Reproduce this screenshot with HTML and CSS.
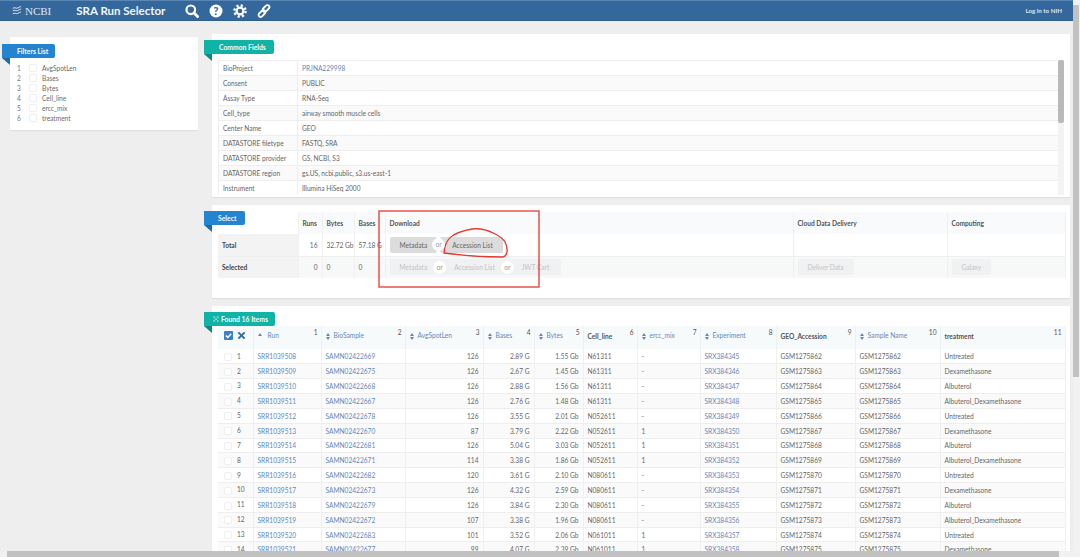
FILE: index.html
```html
<!DOCTYPE html>
<html lang="en">
<head>
<meta charset="utf-8">
<title>SRA Run Selector</title>
<link rel="stylesheet" href="styles.css">
</head>
<body>
<header class="topbar">
  <a class="logo">
    <svg class="logo-mark" viewBox="0 0 12 12"><path d="M1 3.500C3 1.500 5 4 7 3s3-2 4-1.500M1 6.500C3 4.500 5 7 7 6s3-2 4-1.500M1 10C3 8 5 10.500 7 9.500s3-2 4-1.500"/></svg>
    <span class="logo-text">NCBI</span>
  </a>
  <h1 class="title">SRA Run Selector</h1>
  <nav class="tools">
    <svg class="tool" viewBox="0 0 14 14"><circle cx="5.800" cy="5.800" r="4.300" class="ln"/><path d="M9 9l3.600 3.600" class="ln thick"/></svg>
    <svg class="tool" viewBox="0 0 14 14"><circle cx="7" cy="7" r="6.500" class="fill"/><text x="7" y="10.700" class="q">?</text></svg>
    <svg class="tool" viewBox="0 0 14 14"><circle cx="7" cy="7" r="3.400" class="ln"/><circle cx="7" cy="7" r="5.600" class="teeth"/></svg>
    <svg class="tool" viewBox="0 0 14 14"><rect x="7" y="0.500" width="4" height="8" rx="2" transform="rotate(45 9 4.500)" class="ln thin"/><rect x="3" y="5.500" width="4" height="8" rx="2" transform="rotate(45 5 9.500)" class="ln thin"/></svg>
  </nav>
  <a class="login">Log in to NIH</a>
</header>

<div class="layout">
  <aside class="card filters">
    <div class="badge badge-blue">Filters List</div>
    <ul class="filter-list">
      <li><span class="num">1</span><span class="check"></span>AvgSpotLen</li>
      <li><span class="num">2</span><span class="check"></span>Bases</li>
      <li><span class="num">3</span><span class="check"></span>Bytes</li>
      <li><span class="num">4</span><span class="check"></span>Cell_line</li>
      <li><span class="num">5</span><span class="check"></span>ercc_mix</li>
      <li><span class="num">6</span><span class="check"></span>treatment</li>
    </ul>
  </aside>

  <main class="main">
    <section class="card common">
      <div class="badge badge-teal">Common Fields</div>
      <div class="common-wrap">
        <table class="grid common-table">
          <tr><th>BioProject</th><td><a>PRJNA229998</a></td></tr>
          <tr><th>Consent</th><td>PUBLIC</td></tr>
          <tr><th>Assay Type</th><td>RNA-Seq</td></tr>
          <tr><th>Cell_type</th><td>airway smooth muscle cells</td></tr>
          <tr><th>Center Name</th><td>GEO</td></tr>
          <tr><th>DATASTORE filetype</th><td>FASTQ, SRA</td></tr>
          <tr><th>DATASTORE provider</th><td>GS, NCBI, S3</td></tr>
          <tr><th>DATASTORE region</th><td>gs.US, ncbi.public, s3.us-east-1</td></tr>
          <tr><th>Instrument</th><td>Illumina HiSeq 2000</td></tr>
        </table>
        <div class="inner-scroll"><div class="inner-thumb"></div></div>
      </div>
    </section>

    <section class="card select">
      <div class="badge badge-blue">Select</div>
      <table class="grid select-table">
        <colgroup><col class="s-label"><col class="s-runs"><col class="s-bytes"><col class="s-bases"><col class="s-dl"><col class="s-cloud"><col class="s-comp"></colgroup>
        <tr class="s-head"><th class="blank"></th><th>Runs</th><th>Bytes</th><th>Bases</th><th class="pad">Download</th><th class="pad">Cloud Data Delivery</th><th class="pad">Computing</th></tr>
        <tr class="s-total">
          <th class="rowlabel">Total</th><td class="r">16</td><td>32.72 Gb</td><td>57.18 G</td>
          <td class="pad">
            <div class="btns"><span class="btn">Metadata</span><span class="or">or</span><span class="btn">Accession List</span></div>
          </td><td></td><td></td>
        </tr>
        <tr class="s-sel">
          <th class="rowlabel">Selected</th><td class="r">0</td><td>0</td><td>0</td>
          <td class="pad">
            <div class="btns off"><span class="btn">Metadata</span><span class="or">or</span><span class="btn">Accession List</span><span class="or">or</span><span class="btn">JWT Cart</span></div>
          </td>
          <td class="pad"><span class="btn solo">Deliver Data</span></td>
          <td class="pad"><span class="btn solo">Galaxy</span></td>
        </tr>
      </table>
      <svg class="annotation" viewBox="0 0 162 78">
        <rect x="1" y="1" width="160" height="76"/>
        <path d="M66 43C67 30 72 23 94 19C110 17 125 28 127 32C131 40 129 47 124 47C100 47 80 45 66 43Z"/>
      </svg>
    </section>

    <section class="card found">
      <div class="badge badge-teal badge-icon">
        <svg class="mini" viewBox="0 0 8 8"><path d="M1 1l6 6M7 1L1 7M1 1h2M1 1v2M7 1H5M7 1v2M1 7h2M1 7V5M7 7H5M7 7V5"/></svg>Found 16 Items
      </div>
      <table class="grid runs">
        <colgroup><col class="c0"><col class="c1"><col class="c2"><col class="c3"><col class="c4"><col class="c5"><col class="c6"><col class="c7"><col class="c8"><col class="c9"><col class="c10"><col class="c11"></colgroup>
        <thead>
          <tr>
            <th class="ctl"><span class="check-on"><svg viewBox="0 0 10 10"><path d="M2 5l2.200 2.200L8 3"/></svg></span><svg class="cross" viewBox="0 0 10 10"><path d="M1.500 1.500l7 7M8.500 1.500l-7 7"/></svg></th>
            <th class="link-h"><span class="sort up"></span>Run<i>1</i></th>
            <th class="link-h"><span class="sort"></span>BioSample<i>2</i></th>
            <th class="link-h"><span class="sort"></span>AvgSpotLen<i>3</i></th>
            <th class="link-h"><span class="sort"></span>Bases<i>4</i></th>
            <th class="link-h"><span class="sort"></span>Bytes<i>5</i></th>
            <th>Cell_line<i>6</i></th>
            <th class="link-h"><span class="sort"></span>ercc_mix<i>7</i></th>
            <th class="link-h"><span class="sort"></span>Experiment<i>8</i></th>
            <th>GEO_Accession<i>9</i></th>
            <th class="link-h"><span class="sort"></span>Sample Name<i>10</i></th>
            <th>treatment<i>11</i></th>
          </tr>
        </thead>
        <tbody>
          <tr><td><span class="check"></span>1</td><td><a>SRR1039508</a></td><td><a>SAMN02422669</a></td><td class="r">126</td><td class="r">2.89 G</td><td class="r">1.55 Gb</td><td>N61311</td><td>-</td><td><a>SRX384345</a></td><td>GSM1275862</td><td>GSM1275862</td><td>Untreated</td></tr>
          <tr><td><span class="check"></span>2</td><td><a>SRR1039509</a></td><td><a>SAMN02422675</a></td><td class="r">126</td><td class="r">2.67 G</td><td class="r">1.45 Gb</td><td>N61311</td><td>-</td><td><a>SRX384346</a></td><td>GSM1275863</td><td>GSM1275863</td><td>Dexamethasone</td></tr>
          <tr><td><span class="check"></span>3</td><td><a>SRR1039510</a></td><td><a>SAMN02422668</a></td><td class="r">126</td><td class="r">2.88 G</td><td class="r">1.56 Gb</td><td>N61311</td><td>-</td><td><a>SRX384347</a></td><td>GSM1275864</td><td>GSM1275864</td><td>Albuterol</td></tr>
          <tr><td><span class="check"></span>4</td><td><a>SRR1039511</a></td><td><a>SAMN02422667</a></td><td class="r">126</td><td class="r">2.76 G</td><td class="r">1.48 Gb</td><td>N61311</td><td>-</td><td><a>SRX384348</a></td><td>GSM1275865</td><td>GSM1275865</td><td>Albuterol_Dexamethasone</td></tr>
          <tr><td><span class="check"></span>5</td><td><a>SRR1039512</a></td><td><a>SAMN02422678</a></td><td class="r">126</td><td class="r">3.55 G</td><td class="r">2.01 Gb</td><td>N052611</td><td>-</td><td><a>SRX384349</a></td><td>GSM1275866</td><td>GSM1275866</td><td>Untreated</td></tr>
          <tr><td><span class="check"></span>6</td><td><a>SRR1039513</a></td><td><a>SAMN02422670</a></td><td class="r">87</td><td class="r">3.79 G</td><td class="r">2.22 Gb</td><td>N052611</td><td>1</td><td><a>SRX384350</a></td><td>GSM1275867</td><td>GSM1275867</td><td>Dexamethasone</td></tr>
          <tr><td><span class="check"></span>7</td><td><a>SRR1039514</a></td><td><a>SAMN02422681</a></td><td class="r">126</td><td class="r">5.04 G</td><td class="r">3.03 Gb</td><td>N052611</td><td>1</td><td><a>SRX384351</a></td><td>GSM1275868</td><td>GSM1275868</td><td>Albuterol</td></tr>
          <tr><td><span class="check"></span>8</td><td><a>SRR1039515</a></td><td><a>SAMN02422671</a></td><td class="r">114</td><td class="r">3.38 G</td><td class="r">1.86 Gb</td><td>N052611</td><td>1</td><td><a>SRX384352</a></td><td>GSM1275869</td><td>GSM1275869</td><td>Albuterol_Dexamethasone</td></tr>
          <tr><td><span class="check"></span>9</td><td><a>SRR1039516</a></td><td><a>SAMN02422682</a></td><td class="r">120</td><td class="r">3.61 G</td><td class="r">2.10 Gb</td><td>N080611</td><td>-</td><td><a>SRX384353</a></td><td>GSM1275870</td><td>GSM1275870</td><td>Untreated</td></tr>
          <tr><td><span class="check"></span>10</td><td><a>SRR1039517</a></td><td><a>SAMN02422673</a></td><td class="r">126</td><td class="r">4.32 G</td><td class="r">2.59 Gb</td><td>N080611</td><td>-</td><td><a>SRX384354</a></td><td>GSM1275871</td><td>GSM1275871</td><td>Dexamethasone</td></tr>
          <tr><td><span class="check"></span>11</td><td><a>SRR1039518</a></td><td><a>SAMN02422679</a></td><td class="r">126</td><td class="r">3.84 G</td><td class="r">2.30 Gb</td><td>N080611</td><td>-</td><td><a>SRX384355</a></td><td>GSM1275872</td><td>GSM1275872</td><td>Albuterol</td></tr>
          <tr><td><span class="check"></span>12</td><td><a>SRR1039519</a></td><td><a>SAMN02422672</a></td><td class="r">107</td><td class="r">3.38 G</td><td class="r">1.96 Gb</td><td>N080611</td><td>-</td><td><a>SRX384356</a></td><td>GSM1275873</td><td>GSM1275873</td><td>Albuterol_Dexamethasone</td></tr>
          <tr><td><span class="check"></span>13</td><td><a>SRR1039520</a></td><td><a>SAMN02422683</a></td><td class="r">101</td><td class="r">3.52 G</td><td class="r">2.06 Gb</td><td>N061011</td><td>1</td><td><a>SRX384357</a></td><td>GSM1275874</td><td>GSM1275874</td><td>Untreated</td></tr>
          <tr><td><span class="check"></span>14</td><td><a>SRR1039521</a></td><td><a>SAMN02422677</a></td><td class="r">99</td><td class="r">4.07 G</td><td class="r">2.39 Gb</td><td>N061011</td><td>1</td><td><a>SRX384358</a></td><td>GSM1275875</td><td>GSM1275875</td><td>Dexamethasone</td></tr>
        </tbody>
      </table>
    </section>
  </main>
</div>

<div class="vbar"><div class="vthumb"></div></div>
<div class="hbar"><div class="hthumb"></div></div>
</body>
</html>
```

FILE: styles.css
```css
* { box-sizing: border-box; }
html, body { margin: 0; height: 557px; overflow: hidden; }
body {
  background: #eeeeee;
  font-family: Lato, "Liberation Sans", sans-serif;
  font-size: 6.6px;
  color: #666;
}
a { color: #5f88bb; }

.topbar {
  height: 21px;
  background: #34679b;
  border-top: 1px solid #5a88b5;
  border-bottom: 1px solid #2f5d8c;
  display: flex;
  align-items: center;
  color: #fff;
  padding: 0 18px 0 12px;
}
.logo { display: flex; align-items: center; gap: 3px; color: #dfe8f1; }
.logo-mark { width: 10px; height: 11px; }
.logo-mark path { fill: none; stroke: #dfe8f1; stroke-width: 1.2; }
.logo-text { font-family: "Liberation Serif", serif; font-size: 11px; }
.title { margin: 0 0 0 25px; font-size: 11.5px; font-weight: 700; color: #f2f6fa; }
.tools { display: flex; gap: 10px; margin-left: 20px; }
.tool { width: 14px; height: 14px; display: block; }
.ln { fill: none; stroke: #fff; stroke-width: 2.2; }
.ln.thick { stroke-width: 2.8; stroke-linecap: round; }
.ln.thin { stroke-width: 1.8; }
.fill { fill: #fff; }
.q { fill: #34679b; font-size: 10.5px; font-weight: 900; text-anchor: middle; font-family: Lato, sans-serif; }
.teeth { fill: none; stroke: #fff; stroke-width: 2.4; stroke-dasharray: 2.2 2.2; }
.login { margin-left: auto; font-size: 6.2px; font-weight: 700; color: #dfe8f1; }

.layout {
  display: grid;
  grid-template-columns: 188px 858px;
  column-gap: 14px;
  padding-left: 10px;
  align-items: start;
}
.card {
  position: relative;
  background: #fff;
  box-shadow: 0 1px 1px #dfdfdf;
}
.filters { margin-top: 16px; height: 93px; padding: 26px 0 0 7px; }
.main { display: flex; flex-direction: column; gap: 8px; padding-top: 13px; }

.badge {
  position: absolute;
  left: -8px;
  height: 14px;
  line-height: 14px;
  padding: 0 7px 0 14px;
  font-size: 6.8px;
  font-weight: 700;
  color: #f2fbfa;
  border-radius: 0 2px 2px 0;
  white-space: nowrap;
}
.badge::after {
  content: "";
  position: absolute;
  left: 0;
  top: 14px;
  border-top: 7px solid;
  border-left: 8px solid transparent;
}
.badge-blue { background: #2584cf; }
.badge-blue::after { border-top-color: #1d6aa8; }
.badge-teal { background: #11b3a7; }
.badge-teal::after { border-top-color: #0b8a80; }
.filters .badge { top: 7px; padding-left: 15px; padding-right: 7px; }
.common .badge { top: 6px; padding-left: 15px; padding-right: 8px; }
.select .badge { top: 6px; padding-left: 14px; padding-right: 9px; }
.found .badge { top: 6px; padding-left: 9px; padding-right: 7px; display: flex; align-items: center; gap: 2px; }
.mini { width: 6px; height: 6px; }
.mini path { fill: none; stroke: #a9e6e0; stroke-width: .9; }

.filter-list { list-style: none; margin: 0; padding: 0; }
.filter-list li { height: 10px; display: flex; align-items: center; color: #6a6a6a; }
.num { width: 12px; color: #777; }
.check {
  display: inline-block;
  width: 8px;
  height: 8px;
  border: 1px solid #efefef;
  border-radius: 2px;
  background: #fff;
  margin-right: 5px;
  vertical-align: middle;
}

.grid { border-collapse: collapse; table-layout: fixed; }
.grid td, .grid th {
  padding: 0 4px;
  height: 15px;
  text-align: left;
  white-space: nowrap;
  overflow: visible;
}
.r { text-align: right !important; }

.common { height: 163px; padding: 26px 0 0 6px; }
.common-wrap { display: flex; height: 135px; overflow: hidden; }
.common-table { width: 840px; height: 135px; }
.common-table tr { border-bottom: 1px solid #eee; border-top: 1px solid #eee; }
.common-table th { width: 79px; font-weight: 400; border-right: 1px solid #eee; border-left: 1px solid #eee; padding-left: 4px; }
.common-table tr:nth-child(even) { background: #fafafa; }
.inner-scroll { width: 6px; height: 135px; background: #f3f3f3; flex: none; }
.inner-thumb { height: 63px; background: #b9b9b9; border-radius: 2px; }

.select { height: 93px; padding: 7px 0 0 6px; }
.select-table { width: 847px; }
.s-label { width: 80px; } .s-runs { width: 24px; } .s-bytes { width: 32px; }
.s-bases { width: 31px; } .s-dl { width: 408px; } .s-cloud { width: 154px; } .s-comp { width: 118px; }
.select-table td, .select-table th { border-right: 1px solid #f0f0f0; }
.select-table .pad { padding-left: 4px; }
.s-head { background: #f8fafb; }
.s-head th { height: 22px; color: #555; font-weight: 700; }
.s-total td, .s-total th { height: 22px; border-bottom: 1px solid #efefef; }
.s-sel td, .s-sel th { height: 22px; background: #f7f8f8; }
.rowlabel { background: #f3f3f3 !important; color: #444; font-weight: 700; }
.select-table .blank { background: #fff; }
.btns { display: inline-flex; align-items: center; }
.btn {
  display: inline-block;
  height: 16px;
  line-height: 16px;
  padding: 0 10px;
  background: #dcdcdc;
  color: #666;
  border-radius: 2px;
}
.btns.off { background: #f0f1f2; padding-right: 2px; }
.btns.off .btn, .btn.solo { background: #f0f1f2; color: #c4c4c4; }
.btns.off .or { margin: 0 -4px; }
.or {
  width: 13px;
  height: 13px;
  line-height: 13px;
  margin: 0 -5px;
  text-align: center;
  border-radius: 50%;
  background: #fff;
  color: #999;
  position: relative;
  z-index: 1;
}
.btns .btn + .or + .btn { padding-left: 12px; }
.annotation { position: absolute; left: 166px; top: 5px; width: 162px; height: 78px; pointer-events: none; }
.annotation rect, .annotation path { fill: none; stroke: #e23a30; stroke-width: 1.3; }

.found { height: 260px; padding: 20px 0 0 6px; overflow: visible; }
.runs { width: 847px; }
.c0 { width: 35px; } .c1 { width: 68px; } .c2 { width: 84px; } .c3 { width: 78px; }
.c4 { width: 51px; } .c5 { width: 49px; } .c6 { width: 54px; } .c7 { width: 63px; }
.c8 { width: 76px; } .c9 { width: 79px; } .c10 { width: 85px; } .c11 { width: 125px; }
.runs thead { background: #f7fafb; }
.runs thead th {
  position: relative;
  height: 23px;
  padding-bottom: 4px;
  color: #555;
  font-weight: 700;
  border-right: 1px solid #eef1f2;
}
.runs thead .link-h { color: #5f88bb; font-weight: 400; }
.runs thead i {
  position: absolute;
  top: 2px;
  right: 3px;
  font-style: normal;
  font-weight: 400;
  color: #555;
}
.sort { display: inline-block; width: 8px; height: 7px; position: relative; vertical-align: middle; }
.sort::before, .sort::after {
  content: "";
  position: absolute;
  left: 0;
  border-left: 2.2px solid transparent;
  border-right: 2.2px solid transparent;
}
.sort::before { top: 0; border-bottom: 3px solid #5f88bb; }
.sort::after { top: 4px; border-top: 3px solid #5f88bb; }
.sort.up::after { display: none; }
.sort.up { margin-right: 2px; }
.runs tbody tr { border-bottom: 1px solid #eee; }
.runs tbody tr:nth-child(even) { background: #fafafa; }
.runs tbody td { border-right: 1px solid #f0f0f0; height: 14.85px; }
.runs tbody td:first-child { padding-left: 6px; white-space: nowrap; }
.runs .ctl { padding-left: 6px; }
.check-on {
  display: inline-block;
  width: 9px;
  height: 9px;
  background: #3b7fc4;
  border-radius: 1px;
  margin-right: 4px;
  vertical-align: middle;
}
.check-on svg { display: block; width: 9px; height: 9px; }
.check-on path { fill: none; stroke: #fff; stroke-width: 1.6; }
.cross { width: 9px; height: 9px; vertical-align: middle; }
.cross path { fill: none; stroke: #2f6fae; stroke-width: 2.2; }

.vbar { position: fixed; right: 0; top: 0; width: 7px; height: 557px; background: #f1f1f1; padding: 5px 1px 0 0; }
.vthumb { height: 372px; background: #c1c1c1; }
.hbar { position: fixed; left: 0; bottom: 0; width: 1073px; height: 6px; background: #f1f1f1; padding-left: 7px; }
.hthumb { width: 1052px; height: 6px; background: #c1c1c1; }
```
